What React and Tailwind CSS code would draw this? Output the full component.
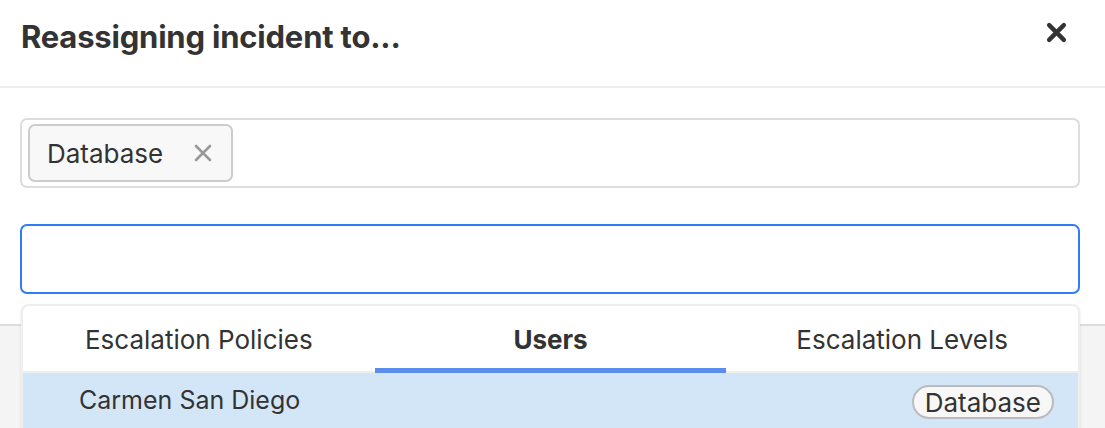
import { useState } from 'react';

function CloseIcon({ className }) {
  return (
    <svg viewBox="0 0 20 20" className={className} fill="none" stroke="currentColor" strokeLinecap="round">
      <path d="M3 3 L17 17 M17 3 L3 17" />
    </svg>
  );
}

const tabs = ['Escalation Policies', 'Users', 'Escalation Levels'];

export default function App() {
  const [active, setActive] = useState(1);

  return (
    <div className="w-[1105px] h-[428px] overflow-hidden bg-white text-[#333] font-['Inter',sans-serif] relative">
      <div className="h-[88px] flex items-center justify-between pl-[21px] pr-[38px] border-b-2 border-[#eeeeee]">
        <h2 className="m-0 text-[31px] font-bold tracking-[-0.2px] pb-[12px]">Reassigning incident to...</h2>
        <CloseIcon className="w-[21px] h-[21px] stroke-[4.2] text-[#333] mb-[21px]" />
      </div>

      <div className="pl-[20px] pr-[25px] pt-[30px] pb-[30px]">
        <div className="h-[70px] border-2 border-[#dddddd] rounded-[7px] px-[6px] flex items-center">
          <span className="h-[58px] flex items-center gap-[30px] pl-[17px] pr-[18px] border-2 border-[#cccccc] bg-[#f8f8f8] rounded-[7px] text-[26px]">
            Database
            <CloseIcon className="w-[20px] h-[20px] stroke-[2.6] text-[#999]" />
          </span>
        </div>
        <input
          className="mt-[36px] block w-full h-[70px] border-2 border-[#2f7cf6] rounded-[7px] outline-none px-[12px] text-[26px]"
          aria-label="Search"
        />
      </div>

      <div className="border-t-2 border-[#dddddd] bg-[#f4f4f4] h-[120px]" />

      <div className="absolute left-[21px] top-[304px] w-[1059px] bg-white border-2 border-[#eeeeee] rounded-t-[8px] shadow-sm">
        <div className="grid grid-cols-3 border-b-2 border-[#eeeeee]">
          {tabs.map((t, i) => (
            <button
              key={t}
              onClick={() => setActive(i)}
              className={`h-[67px] pt-[4px] text-[26px] flex items-center justify-center border-b-[5px] -mb-[2px] ${
                i === active ? 'font-bold border-[#5b8def]' : 'border-transparent'
              }`}>
              {t}
            </button>
          ))}
        </div>
        <div className="h-[60px] bg-[#d3e6f8] flex items-start justify-between pl-[56px] pr-[24px] pt-[9px]">
          <span className="text-[25px]">Carmen San Diego</span>
          <span className="mt-[3px] h-[34px] px-[11px] flex items-center rounded-full border-2 border-[#bbbbbb] bg-[#f7f7f7] text-[26px]">
            Database
          </span>
        </div>
      </div>
    </div>
  );
}
